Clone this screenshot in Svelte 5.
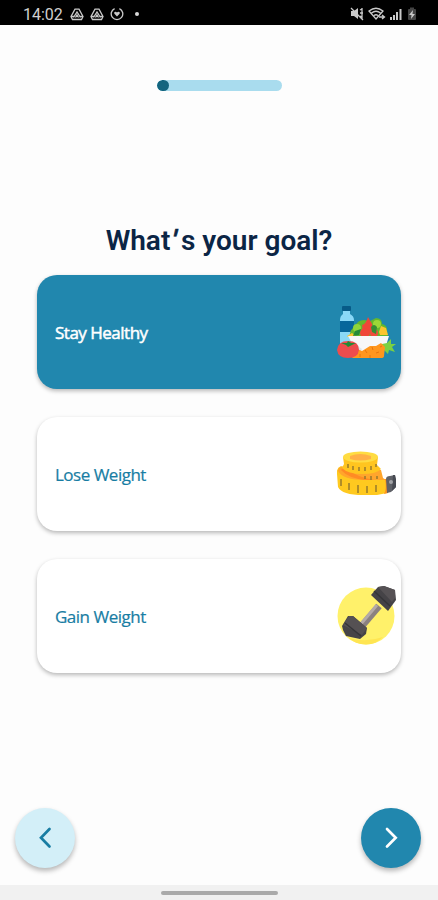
<script lang="ts">
  type Goal = 'healthy' | 'lose' | 'gain';

  const goals: { id: Goal; label: string }[] = [
    { id: 'healthy', label: 'Stay Healthy' },
    { id: 'lose', label: 'Lose Weight' },
    { id: 'gain', label: 'Gain Weight' }
  ];

  let selected = $state<Goal>('healthy');
  const progress = 10;
</script>

<div class="screen">
  <header class="status-bar">
    <span class="clock">14:02</span>
    {#each [0, 1] as n (n)}
      <svg class="drive" width="14" height="13" viewBox="0 0 14 13">
        <path d="M5 1.200h4l4 7.300-1.500 3h-9L1 8.500z" />
        <path d="M3.500 9.500L7 4l3.500 5.500M5.500 9.500L7 7l1.500 2.500M1 8.500h3M10 8.500h3" />
      </svg>
    {/each}
    <svg class="health" width="14" height="14" viewBox="0 0 14 14">
      <path d="M4.600 1.600a5.800 5.800 0 1 0 4.800 0" />
      <path class="fill" d="M7 9.500L4.400 6.800c-1-1.600 1.300-2.900 2.600-1.200 1.300-1.700 3.600-.4 2.600 1.200z" />
    </svg>
    <span class="dot"></span>

    <svg class="system" width="70" height="16" viewBox="0 0 70 16">
      <path class="fill" d="M1 5h3l4-3v11l-4-3H1z" />
      <path d="M1 2l12 12M10 4l2-1M10 7h3M10 10l2 1M12 2v11" />
      <path d="M19 5q7-5.500 14 0l-7 8zM21.500 7q4.500-3.500 9 0M24 9.500q2-1.500 4 0" />
      <path d="M29 11h5M32 9l2.500 2-2.500 2" />
      <path class="signal" d="M41 14v-3M44 14V9M47 14V6M50.500 14V3" />
      <rect class="battery" x="58" y="3" width="8" height="11" rx="1" />
      <path class="battery" d="M60 1.500h4v2h-4z" />
      <path class="fill" d="M63 4l-4 5h2.500L61 13l4-5h-2.500z" />
    </svg>
  </header>

  <main>
    <div class="progress">
      <div class="progress-value" style="width: {progress}%"></div>
    </div>

    <h1>What<span class="prime">′</span>s your goal?</h1>

    <div class="goals">
      {#each goals as goal (goal.id)}
        <button
          class="goal"
          class:selected={selected === goal.id}
          onclick={() => (selected = goal.id)}
        >
          <span>{goal.label}</span>
          <svg width="60" height="60" viewBox="0 0 60 60">
            {#if goal.id === 'healthy'}
              <rect x="5" y="4" width="9" height="5" rx="1" fill="#075b88" />
              <path d="M6 9h7v3q4 2 4 6v34H3V18q0-4 3-6z" fill="#8ad8f7" />
              <path d="M3 19h14v11H3z" fill="#07669b" />
              <path d="M13 36q-1-9 5-11 2-7 9-7l6 1 6-3q6 0 6 6 5 1 5 6l1 8z" fill="#64b72d" />
              <circle cx="20" cy="26" r="4" fill="#8fd53b" />
              <circle cx="40" cy="22" r="4" fill="#9cd737" />
              <path d="M42 30l2-6 5 2 2 7h-8z" fill="#fbc52e" />
              <path d="M10 34l5-3 5 4H11z" fill="#fbc52e" />
              <path d="M25 23q4-1 6-8l4 7 2 8H26z" fill="#ef4638" />
              <circle cx="28" cy="31" r="5" fill="#ef4638" />
              <circle cx="37" cy="31" r="4" fill="#f04b3b" />
              <path d="M34 25q3-4 6 0l-1 7-4-2z" fill="#348e32" />
              <path d="M18 29l6-2-2 6-6 1z" fill="#258a38" />
              <path d="M11 34h41l-4 13-8 5H21z" fill="#f7f7f8" />
              <path d="M19 43l6 4-3 5h-4z" fill="#dbe5ed" />
              <path d="M45 42l5-1 4-4v5h5l-4 3 3 5-6-2-1 4-6-6z" fill="#7bd143" />
              <path d="M14 50l6-3 5 2 8-5 6 0 5-3 4 4-1 9q0 2-3 2H16q-3-1-2-6z" fill="#ff961e" />
              <path d="M28 48l2 3M35 45l1 3M39 51l3-1M23 52v3M33 53v3M43 45l2-1M19 50l2 1" stroke="#e8740c" />
              <path d="M0 48q1-9 11-9 11 0 11 9-1 8-11 8Q1 56 0 48z" fill="#ed4c4d" />
              <path d="M4 41l6 0 1-2 3 2 5 0-4 2-4 2-2-2z" fill="#218b35" />
            {:else if goal.id === 'lose'}
              <path d="M4 22Q-1 24 0 30l1 13q4 8 25 8h14l10-2V35H28q-8-2-13-7z" fill="#ffc91f" />
              <path d="M4 23q4-2 8 2l32 1 2 8q2 2 5 2H28Q6 36 1 27q0-3 3-4z" fill="#ffa52c" />
              <path d="M4 26q7 8 24 10h9q-17-3-23-9l-6-3q-3 0-4 2z" fill="#ff8b24" />
              <path d="M6 13l1 7-2 4q6 6 20 6 15 0 19-5l-4-4 1-8z" fill="#ffc51f" />
              <ellipse cx="23.500" cy="13" rx="17.500" ry="5.500" fill="#ffdc42" />
              <path d="M13 12q10-4 21 0v3q-11 3-21 0z" fill="#ffb047" />
              <path d="M48 35h3v14l-4 1q3-5 1-15z" fill="#ff951e" />
              <path d="M11 20v4M16 22v4M22 23v4M28 23v4M34 22v4M39 20v3M4 35v7M12 39v7M21 41v8M30 42v7M39 41v7M28 32v3M34 32v4M40 32v3" stroke="#91762d" stroke-width="1.400" />
              <path d="M49 35q0-3 4-3l5-1 1 12-5 5-4 1z" fill="#606268" />
              <path d="M56 31l2 0 1 4v8l-4 4z" fill="#484b53" />
              <circle cx="54" cy="38" r="2" fill="#a3a4a8" />
            {:else}
              <circle cx="29" cy="30" r="28.500" fill="#fff16a" />
              <path d="M12 52q17 5 34-1-7 7.500-17 7.500T12 52z" fill="#ffe552" />
              <path d="M24 41l18-21" stroke="#8b8280" stroke-width="7" />
              <path d="M23 39l17-20" stroke="#b4aaa7" stroke-width="3" />
              <path d="M5 40l6-10 5 0 14 12-1 6-6 5-14-3-3-6z" fill="#464447" />
              <path d="M6 39l6-9 4 0 14 12-5 7z" fill="#555153" />
              <path d="M8 37l16 13" stroke="#353538" stroke-width="1.500" />
              <path d="M34 9l7-8 6-1 11 4 1 10-8 11z" fill="#454347" />
              <path d="M41 1l6-1 11 4 0 8-3 4z" fill="#565255" />
              <path d="M37 5l16 15" stroke="#353538" stroke-width="1.500" />
            {/if}
          </svg>
        </button>
      {/each}
    </div>

    <footer>
      <button class="nav back" aria-label="Back">
        <svg width="24" height="24" viewBox="0 0 24 24"><path d="M16.500 3L8 11.800l8.500 8.700" /></svg>
      </button>
      <button class="nav next" aria-label="Next">
        <svg width="24" height="24" viewBox="0 0 24 24"><path d="M8 3l8.700 8.800L8 20.500" /></svg>
      </button>
    </footer>
  </main>

  <div class="gesture-bar"><span></span></div>
</div>

<style>
  :global(body) {
    margin: 0;
  }
  .screen {
    background: #fdfdfd;
    display: flex;
    flex-direction: column;
    font-family: "Open Sans", "Noto Sans", sans-serif;
    height: 900px;
    width: 438px;
  }
  .status-bar {
    align-items: center;
    background: #000;
    box-sizing: border-box;
    color: #d0d0d0;
    display: flex;
    flex: none;
    height: 25px;
    padding: 3px 18px 0 23px;
  }
  .status-bar svg {
    fill: none;
    stroke: #c9c9c9;
    stroke-width: 1.3;
  }
  .status-bar .fill {
    fill: #c9c9c9;
    stroke: none;
  }
  .clock {
    font-family: Roboto, sans-serif;
    font-size: 16px;
    line-height: 20px;
    padding-top: 1px;
    width: 47px;
  }
  .drive {
    margin-right: 6px;
  }
  .dot {
    background: #d8d8d8;
    border-radius: 50%;
    height: 4px;
    margin-left: 11px;
    width: 4px;
  }
  .system {
    margin-left: auto;
  }
  .status-bar .signal {
    stroke-width: 2;
  }
  .status-bar .battery {
    fill: #444;
    stroke: none;
  }
  main {
    align-items: center;
    display: flex;
    flex: 1;
    flex-direction: column;
  }
  .progress {
    background: #a9dcee;
    border-radius: 6px;
    height: 11px;
    margin-top: 55px;
    overflow: hidden;
    width: 125px;
  }
  .progress-value {
    background: #13657f;
    border-radius: 6px;
    height: 100%;
  }
  h1 {
    color: #0b2545;
    font-family: Roboto, sans-serif;
    font-size: 28px;
    font-weight: 600;
    line-height: 36px;
    margin: 132px 0 16px;
    white-space: nowrap;
  }
  .prime {
    display: inline-block;
    -webkit-text-stroke: 0.6px;
    padding: 0 4px 0 2px;
    transform: skewX(-12deg);
  }
  .goals {
    display: flex;
    flex-direction: column;
    gap: 28px;
    width: 364px;
  }
  .goal {
    align-items: center;
    background: #fff;
    border: 0;
    border-radius: 20px;
    box-shadow: 0 2px 4px rgba(0, 0, 0, 0.28);
    color: #187da3;
    display: flex;
    font-family: "Open Sans", "Noto Sans", sans-serif;
    font-size: 17px;
    height: 114px;
    justify-content: space-between;
    letter-spacing: -0.5px;
    -webkit-text-stroke: 0.2px;
    padding: 0 4px 0 18px;
  }
  .goal.selected {
    background: #2187ae;
    color: #fff;
    font-weight: 500;
    letter-spacing: -0.5px;
    -webkit-text-stroke: 0.5px;
  }
  footer {
    box-sizing: border-box;
    display: flex;
    justify-content: space-between;
    margin-top: auto;
    padding: 0 17px 17px 15px;
    width: 100%;
  }
  .nav {
    align-items: center;
    border: 0;
    border-radius: 50%;
    box-shadow: 0 3px 5px rgba(0, 0, 0, 0.28);
    display: flex;
    height: 60px;
    justify-content: center;
    padding: 0;
    width: 60px;
  }
  .nav svg {
    fill: none;
    stroke: currentColor;
    stroke-linecap: round;
    stroke-width: 2.7;
  }
  .back {
    background: #d3eff8;
    color: #187da3;
  }
  .next {
    background: #2187ae;
    color: #fff;
  }
  .gesture-bar {
    background: #f1f1f1;
    display: flex;
    flex: none;
    height: 15px;
    justify-content: center;
  }
  .gesture-bar span {
    background: #aaa;
    border-radius: 2px;
    height: 4px;
    margin-top: 6px;
    width: 117px;
  }
</style>
